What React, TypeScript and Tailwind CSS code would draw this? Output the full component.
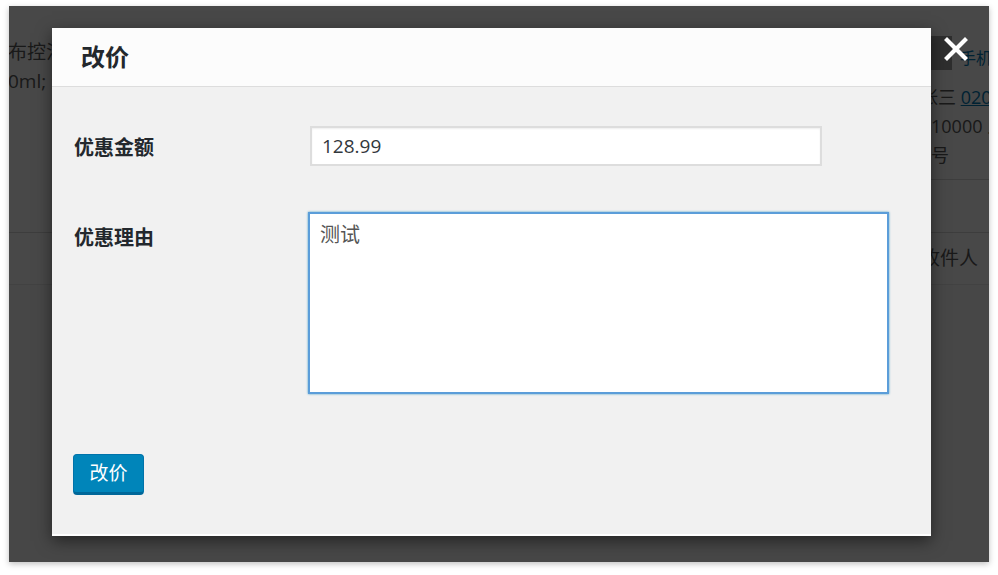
export default function App() {
  const font = { fontFamily: '"Open Sans", "Noto Sans CJK SC", sans-serif' };
  return (
    <div className="w-[998px] h-[575px] bg-white pl-[9px] pt-[6px]" style={font}>
      <div className="relative w-[980px] h-[556px] overflow-hidden bg-[#f1f1f1] shadow-[0_2px_6px_rgba(0,0,0,0.25)]">
        {/* page behind the overlay */}
        <div className="flex flex-col text-[#555]">
          <div className="flex justify-between h-[226px]">
            <div className="-ml-[1px] w-[44px] overflow-hidden whitespace-nowrap pt-[32px] text-[19px] leading-[29px]">
              <div>布控泪滑润霜</div>
              <div>0ml; 规格</div>
            </div>
            <div className="w-[59px] flex flex-col">
              <div className="flex items-end gap-[8px] pt-[30px] h-[64px] whitespace-nowrap">
                <div className="w-[22px] h-[34px] shrink-0 bg-[#9a9a9a]" />
                <span className="text-[16px] text-[#0073aa] leading-none pb-[4px]">手机</span>
              </div>
              <div className="-ml-[10px] text-[18px] leading-[29px] pt-[13px] whitespace-nowrap">
                <div>
                  张三 <span className="text-[#0073aa] underline">020</span>
                </div>
                <div className="pl-[11px]">10000 人</div>
                <div className="pl-[11px]">号</div>
              </div>
              <div className="mt-auto mb-[52px] border-t border-[#ccc]" />
            </div>
          </div>
          <div className="border-t border-[#ccc] h-[52px] flex items-center justify-end pr-[11px]">
            <span className="text-[19px] whitespace-nowrap">收件人</span>
          </div>
          <div className="border-t border-[#ddd] h-[300px] bg-[#eee]" />
        </div>

        {/* overlay */}
        <div className="absolute inset-0 bg-black/70" />

        {/* close */}
        <button className="absolute left-[933px] top-[29px] w-[28px] h-[28px] flex items-center justify-center">
          <svg width="24" height="24" viewBox="0 0 24 24">
            <path d="M3 3 L21 21 M21 3 L3 21" stroke="#fff" strokeWidth="4.2" strokeLinecap="square" />
          </svg>
        </button>

        {/* modal */}
        <div className="absolute left-[43px] top-[22px] w-[879px] h-[508px] bg-white flex flex-col shadow-[0_5px_15px_rgba(0,0,0,0.5)]">
          <div className="h-[59px] shrink-0 bg-[#fcfcfc] border-b border-[#ddd] flex items-center pl-[29px]">
            <h1 className="text-[24px] font-bold text-[#23282d] leading-none">改价</h1>
          </div>
          <div className="flex-1 mb-[2px] bg-[#f1f1f1] px-[22px] pt-[39px] flex flex-col">
            <div className="flex items-start">
              <label className="w-[234px] shrink-0 pt-[8px] text-[20px] font-bold leading-[28px] text-[#23282d]">
                优惠金额
              </label>
              <input
                defaultValue="128.99"
                className="ml-[2px] w-[512px] h-[40px] border-2 border-[#ddd] bg-white px-[10px] text-[19px] text-[#32373c] shadow-[inset_0_1px_2px_rgba(0,0,0,0.07)] outline-none"
              />
            </div>
            <div className="flex items-start mt-[46px]">
              <label className="w-[234px] shrink-0 pt-[12px] text-[20px] font-bold leading-[28px] text-[#23282d]">
                优惠理由
              </label>
              <textarea
                defaultValue="测试"
                className="w-[581px] h-[182px] resize-none border-2 border-[#5b9dd9] bg-white px-[10px] py-[7px] text-[20px] leading-[28px] text-[#555] shadow-[0_0_2px_rgba(30,140,190,0.8)] outline-none"
              />
            </div>
            <div className="mt-[60px]">
              <button className="-ml-[1px] w-[71px] h-[41px] rounded-[4px] bg-[#0085ba] border border-[#0073aa] border-b-[3px] border-b-[#006799] text-white text-[19px] leading-none">
                改价
              </button>
            </div>
          </div>
        </div>
      </div>
    </div>
  );
}
